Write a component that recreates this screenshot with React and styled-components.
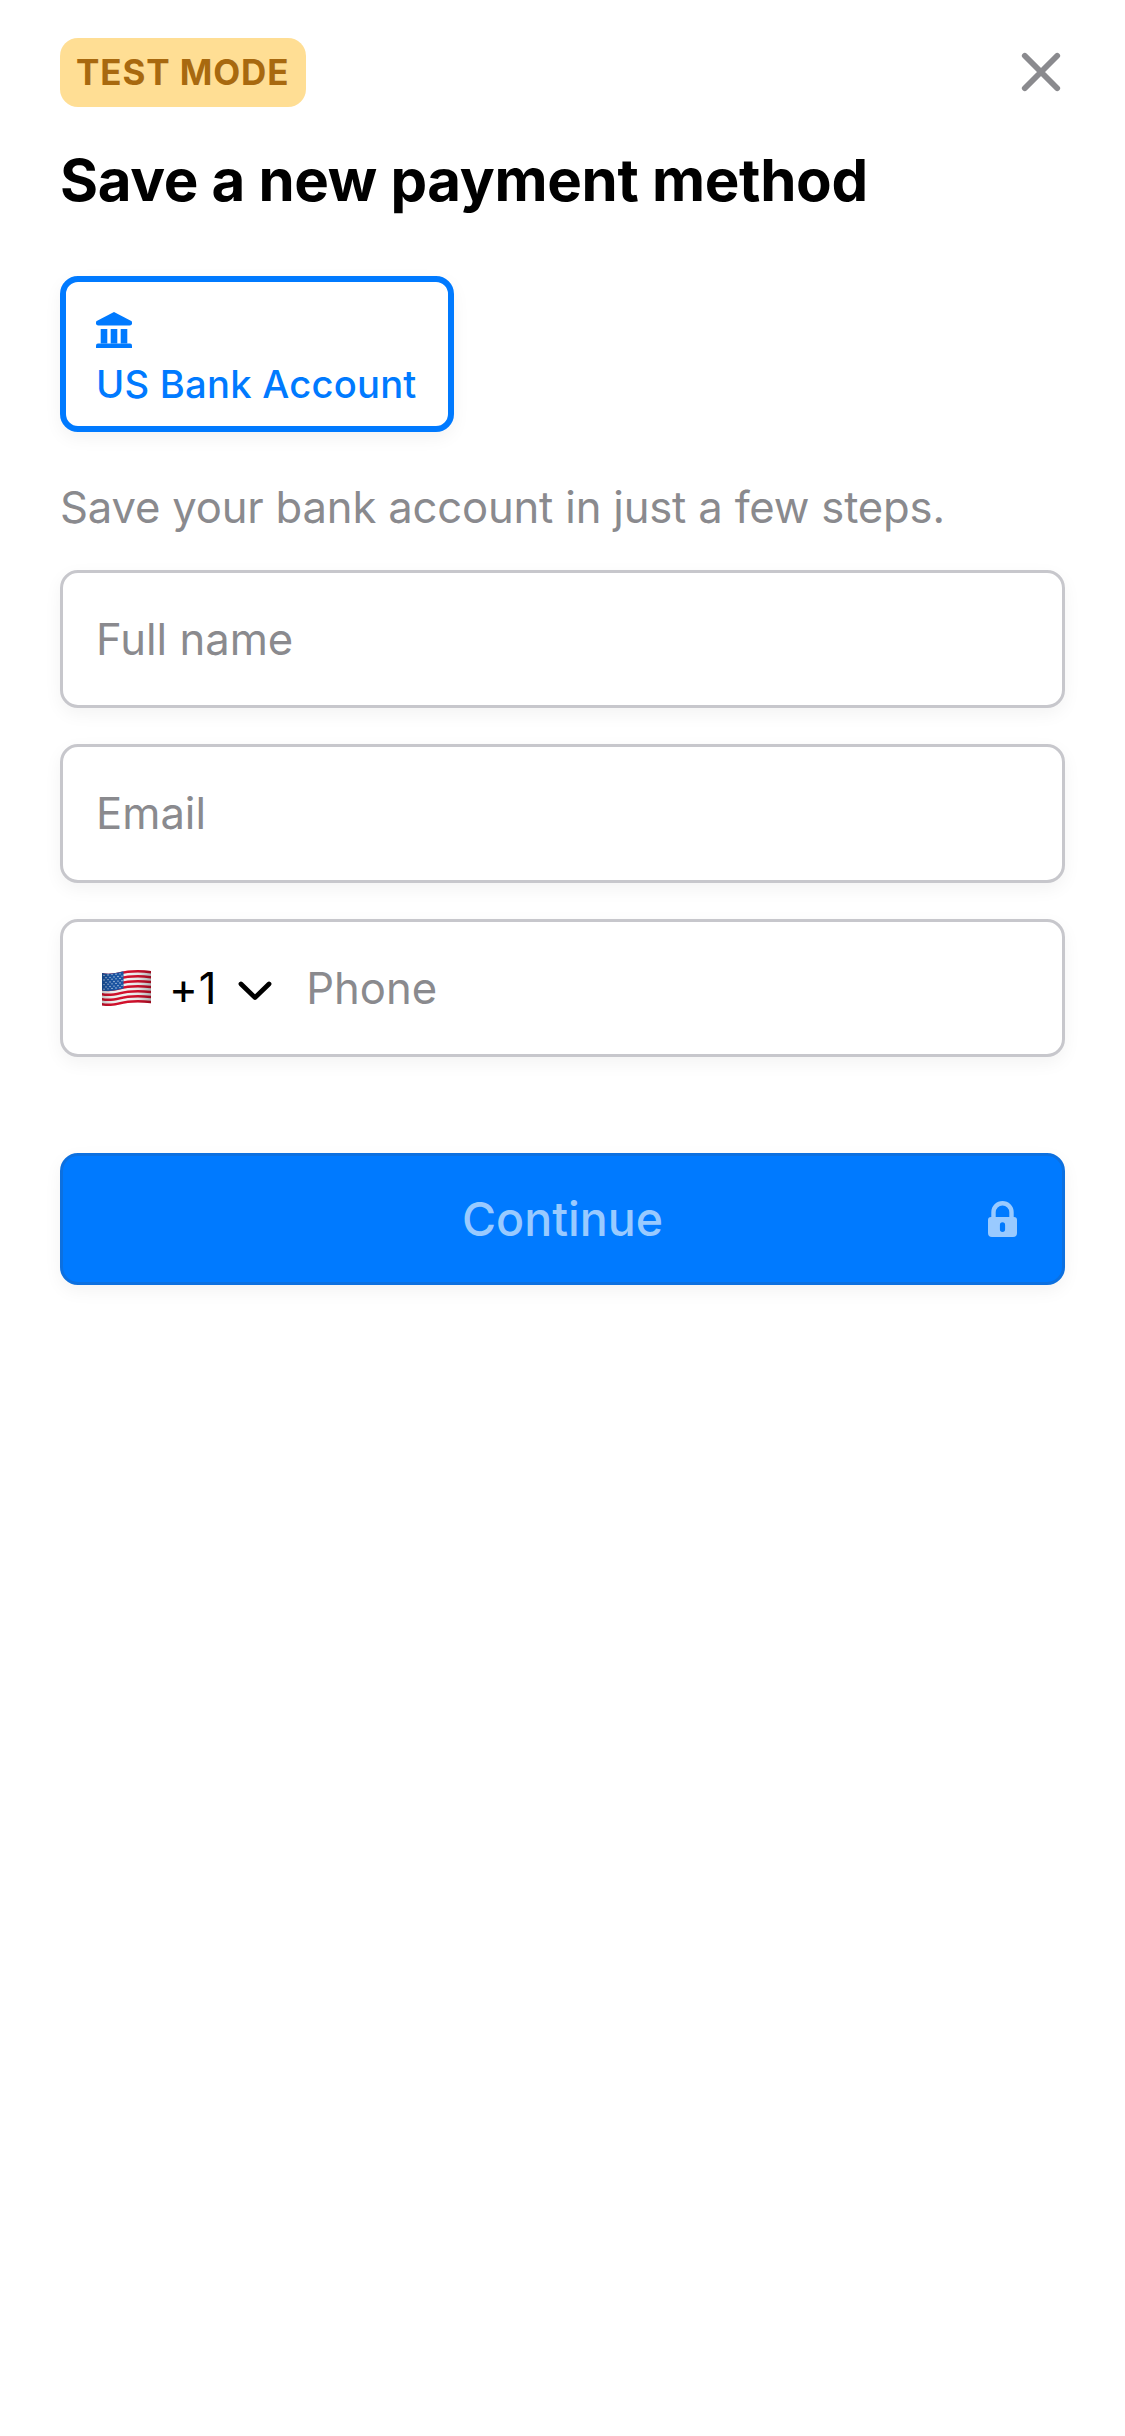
import React from "react";
import styled, { createGlobalStyle } from "styled-components";

const GlobalStyle = createGlobalStyle`
  *, *::before, *::after { box-sizing: border-box; }
  body {
    margin: 0;
    background: #ffffff;
    font-family: Inter, "Liberation Sans", sans-serif;
    -webkit-font-smoothing: antialiased;
  }
  svg { display: block; flex: none; }
`;

const Sheet = styled.main`
  display: flex;
  flex-direction: column;
  width: 1125px;
  min-height: 2436px;
  padding: 38px 60px;
  background: #ffffff;
`;

const Header = styled.header`
  display: flex;
  align-items: center;
  justify-content: space-between;
  height: 69px;
`;

const Badge = styled.span`
  display: flex;
  align-items: center;
  width: 246px;
  height: 69px;
  padding: 0 0 2px 16px;
  border-radius: 18px;
  background: #ffde94;
  color: #a8690f;
  font-size: 35px;
  font-weight: 650;
  letter-spacing: 0.9px;
  white-space: nowrap;
`;

const CloseButton = styled.button`
  display: flex;
  padding: 0 0 1px;
  border: 0;
  background: none;
  color: #8a8a8e;
`;

const Title = styled.h1`
  margin: 37px 0 60px;
  font-size: 58.2px;
  font-weight: 700;
  line-height: 72px;
  letter-spacing: -0.33px;
  color: #000000;
  white-space: nowrap;
`;

const MethodCard = styled.button`
  display: flex;
  flex-direction: column;
  align-items: flex-start;
  gap: 12px;
  width: 394px;
  height: 156px;
  padding: 30px 30px 18px;
  border: 6px solid #007aff;
  border-radius: 18px;
  background: #ffffff;
  box-shadow: 0 6px 18px rgba(0, 0, 0, 0.05);
  color: #007aff;
  font-family: inherit;
`;

const MethodName = styled.span`
  font-size: 38.2px;
  font-weight: 500;
  line-height: 48px;
  letter-spacing: 0.22px;
  white-space: nowrap;
`;

const Hint = styled.p`
  margin: 49px 0 35px;
  font-size: 43.6px;
  line-height: 54px;
  letter-spacing: -0.18px;
  color: #8a8a8e;
  white-space: nowrap;
`;

const Form = styled.div`
  display: flex;
  flex-direction: column;
  gap: 36px;
`;

const Field = styled.div`
  display: flex;
  align-items: center;
  height: 138.33px;
  padding: 0 33px;
  border: 3px solid #c7c7cc;
  border-radius: 18px;
  background: #ffffff;
  box-shadow: 0 6px 18px rgba(0, 0, 0, 0.05);
`;

const Placeholder = styled.span`
  padding-top: ${(p) => (p.$lowered ? "2px" : "0")};
  font-size: 43.6px;
  color: #8a8a8e;
`;

const Country = styled.div`
  display: flex;
  align-items: center;
  margin-right: 34px;
  padding-left: 6px;
`;

const DialCode = styled.span`
  margin: 0 21px 0 18px;
  padding-top: 2px;
  font-size: 43.6px;
  letter-spacing: 0.8px;
  color: #000000;
`;

const Chevron = styled.span`
  padding-top: 6px;
`;

const Submit = styled.button`
  display: grid;
  grid-template-columns: 1fr auto 1fr;
  align-items: center;
  height: 132px;
  margin-top: 96px;
  padding: 0 45px;
  border: 3px solid #0c70e0;
  border-radius: 18px;
  background: #007aff;
  box-shadow: 0 6px 18px rgba(0, 0, 0, 0.05);
  color: #99caff;
  font-family: inherit;
  font-size: 46.5px;
  font-weight: 500;
`;

const SubmitLabel = styled.span`
  grid-column: 2;
`;

const SubmitIcon = styled.span`
  justify-self: end;
`;

const CloseIcon = () => (
  <svg width="48" height="48" viewBox="0 0 48 48" fill="none" stroke="currentColor" strokeWidth="5.8" strokeLinecap="round">
    <path d="M7.8 7.8 40.2 40.2M40.2 7.8 7.8 40.2" />
  </svg>
);

const BankIcon = () => (
  <svg width="36" height="36" viewBox="0 0 36 36" fill="currentColor">
    <path d="M18 0 35.3 9.1Q36 9.5 36 10.3V11.2Q36 13.5 33.7 13.5H2.3Q0 13.5 0 11.2V10.3Q0 9.5.7 9.1Z" />
    <path d="M4.7 17h6.6v14.5H4.7zM14.7 17h6.6v14.5h-6.6zM24.7 17h6.6v14.5h-6.6z" />
    <path d="M0 36V33.5Q0 31.5 2 31.5H34Q36 31.5 36 33.5V36Z" />
  </svg>
);

const ChevronIcon = () => (
  <svg width="34" height="20" viewBox="0 0 34 20" fill="none" stroke="#000" strokeWidth="4.8" strokeLinecap="round" strokeLinejoin="round">
    <path d="M3 3 17 16.5 31 3" />
  </svg>
);

const LockIcon = () => (
  <svg width="29" height="36" viewBox="0 0 29 36">
    <path d="M5.5 17V11.2a9 9 0 0 1 18 0V17" fill="none" stroke="currentColor" strokeWidth="4.4" />
    <path fillRule="evenodd" fill="currentColor" d="M3 16H26Q29 16 29 19V32Q29 36 25 36H4Q0 36 0 32V19Q0 16 3 16ZM14.5 21.3A2.6 2.6 0 0 0 11.9 23.9V28.3A2.6 2.6 0 0 0 17.1 28.3V23.9A2.6 2.6 0 0 0 14.5 21.3Z" />
  </svg>
);

const STRIPE = 32.4 / 13;
const wave = (y) => `M0 ${y + 3}C5 ${y + 4.2} 11 ${y + 3.8} 18 ${y + 2}S36 ${y - 0.8} 49 ${y + 0.9}`;
const band = (y, h) =>
  `${wave(y)}V${y + h + 0.9}C36 ${y + h - 0.8} 25 ${y + h + 0.2} 18 ${y + h + 2}S5 ${y + h + 4.2} 0 ${y + h + 3}Z`;

const FlagIcon = () => (
  <svg width="49" height="36" viewBox="0 0 49 36">
    <defs>
      <linearGradient id="fold" x1="0" x2="1" y1="0" y2="0">
        <stop offset="0" stopColor="#000" stopOpacity="0.2" />
        <stop offset="0.2" stopColor="#000" stopOpacity="0.03" />
        <stop offset="0.5" stopColor="#000" stopOpacity="0" />
        <stop offset="0.75" stopColor="#000" stopOpacity="0.06" />
        <stop offset="1" stopColor="#000" stopOpacity="0.28" />
      </linearGradient>
    </defs>
    <path d={band(0, 32.4)} fill="#f2f2f2" />
    {[0, 2, 4, 6, 8, 10, 12].map((i) => (
      <path key={i} d={band(i * STRIPE, STRIPE)} fill="#d3102c" />
    ))}
    <path d="M0 3C6 4.4 13 3.5 21.5 1.2V18.6C13 20.9 6 21.8 0 20.4Z" fill="#1b56a5" />
    {[0, 1, 2, 3, 4, 5, 6].map((r) =>
      [0, 1, 2, 3, 4].map((c) => (
        <circle key={`${r}-${c}`} cx={(r % 2 ? 4 : 2) + c * 4} cy={5.4 + r * 2.3 - c * 0.4} r="0.65" fill="#d9e6f5" />
      ))
    )}
    <path d={band(0, 32.4)} fill="url(#fold)" />
  </svg>
);

export default function App() {
  return (
    <>
      <GlobalStyle />
      <Sheet>
        <Header>
          <Badge>TEST MODE</Badge>
          <CloseButton aria-label="Close">
            <CloseIcon />
          </CloseButton>
        </Header>
        <Title>Save a new payment method</Title>
        <MethodCard>
          <BankIcon />
          <MethodName>US Bank Account</MethodName>
        </MethodCard>
        <Hint>Save your bank account in just a few steps.</Hint>
        <Form>
          <Field>
            <Placeholder>Full name</Placeholder>
          </Field>
          <Field>
            <Placeholder>Email</Placeholder>
          </Field>
          <Field>
            <Country>
              <FlagIcon />
              <DialCode>+1</DialCode>
              <Chevron>
                <ChevronIcon />
              </Chevron>
            </Country>
            <Placeholder $lowered>Phone</Placeholder>
          </Field>
        </Form>
        <Submit>
          <SubmitLabel>Continue</SubmitLabel>
          <SubmitIcon>
            <LockIcon />
          </SubmitIcon>
        </Submit>
      </Sheet>
    </>
  );
}
